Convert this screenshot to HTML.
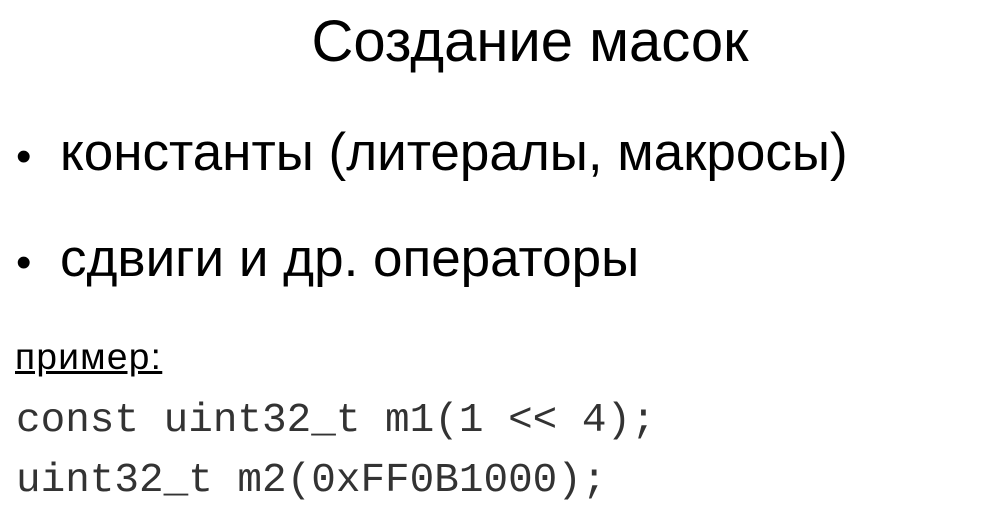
<!DOCTYPE html>
<html><head><meta charset="utf-8"><style>
body{margin:0;width:990px;height:521px;background:#fff;position:relative;overflow:hidden;font-family:"Liberation Sans",sans-serif;color:#000}
div{position:absolute;white-space:nowrap}
.t{left:0;width:1060px;text-align:center;top:8px;font-size:58px}
.b{font-size:53px;left:60px}
.d{font-size:44px;left:16px}
.m{font-family:"Liberation Mono",monospace;font-size:41px;left:16px;color:#333}
</style></head><body>
<div class="t">Создание масок</div>
<div class="d" style="top:132px">•</div>
<div class="b" style="top:122px">константы (литералы, макросы)</div>
<div class="d" style="top:238px">•</div>
<div class="b" style="top:228px">сдвиги и др. операторы</div>
<div style="left:15px;top:336px;font-size:37px;text-decoration:underline;letter-spacing:1.3px">пример:</div>
<div class="m" style="top:398px">const uint32_t m1(1 &lt;&lt; 4);</div>
<div class="m" style="top:458px">uint32_t m2(0xFF0B1000);</div>
</body></html>
